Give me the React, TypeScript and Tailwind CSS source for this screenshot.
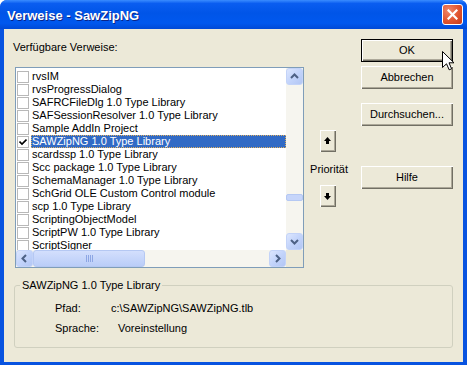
import { ReactNode } from 'react';

const refs = [
  { name: 'rvsIM', checked: false },
  { name: 'rvsProgressDialog', checked: false },
  { name: 'SAFRCFileDlg 1.0 Type Library', checked: false },
  { name: 'SAFSessionResolver 1.0 Type Library', checked: false },
  { name: 'Sample AddIn Project', checked: false },
  { name: 'SAWZipNG 1.0 Type Library', checked: true },
  { name: 'scardssp 1.0 Type Library', checked: false },
  { name: 'Scc package 1.0 Type Library', checked: false },
  { name: 'SchemaManager 1.0 Type Library', checked: false },
  { name: 'SchGrid OLE Custom Control module', checked: false },
  { name: 'scp 1.0 Type Library', checked: false },
  { name: 'ScriptingObjectModel', checked: false },
  { name: 'ScriptPW 1.0 Type Library', checked: false },
  { name: 'ScriptSigner', checked: false },
];

const selectedIndex = 5;

// classic 3d button look used by the VBA dialogs
const btn3d =
  'bg-[#ECE9D8] shadow-[inset_1px_1px_0_#ffffff,inset_-1px_-1px_0_#716F64,inset_-2px_-2px_0_#ACA899] flex items-center justify-center text-black';

const ScrollBtn = ({ dir }: { dir: 'up' | 'down' | 'left' | 'right' }) => {
  const rot = { up: 0, right: 90, down: 180, left: 270 }[dir];
  return (
    <div className="w-[17px] h-[17px] shrink-0 rounded-[3px] border border-[#C3D3F8] bg-[linear-gradient(135deg,#DCE6FE_0%,#C3D4FB_50%,#B2C6F4_100%)] flex items-center justify-center">
      <svg width="9" height="9" viewBox="0 0 9 9" style={{ transform: `rotate(${rot}deg)` }}>
        <path d="M1 6 L4.5 2.5 L8 6" fill="none" stroke="#4D6185" strokeWidth="2" />
      </svg>
    </div>
  );
};

const PushButton = ({ children, isDefault }: { children: ReactNode; isDefault?: boolean }) => (
  <div
    className={`w-[92px] h-[23px] ${btn3d} ${isDefault ? 'border border-black' : ''}`}
  >
    {children}
  </div>
);

const Arrow = ({ down }: { down?: boolean }) => (
  <div className={`w-[16px] h-[22px] ${btn3d}`}>
    <svg width="7" height="8" viewBox="0 0 7 8" style={{ transform: down ? 'rotate(180deg)' : undefined }}>
      <polygon points="3.5,0 7,4 0,4" fill="#000" />
      <rect x="2" y="4" width="3" height="3" fill="#000" />
    </svg>
  </div>
);

export default function App() {
  return (
    <div className="relative w-[467px] h-[365px] flex flex-col bg-[#0853E0] rounded-t-[7px] overflow-hidden font-['Liberation_Sans',Arial,sans-serif] text-[11px] leading-[13px] text-black">
      {/* title bar */}
      <div className="h-[29px] shrink-0 flex items-center justify-between pl-[7px] pr-[4px] bg-[linear-gradient(to_bottom,#3A8CFF_0%,#0A5DF0_12%,#0055E8_45%,#0058EE_80%,#0049D6_100%)]">
        <span className="text-white font-bold text-[13px] pt-[1px] [text-shadow:1px_1px_0_#0A2488]">
          Verweise - SawZipNG
        </span>
        <div className="w-[21px] h-[21px] rounded-[3px] border border-white bg-[radial-gradient(circle_at_30%_30%,#F0876A_0%,#E0542F_55%,#C43A1A_100%)] flex items-center justify-center">
          <svg width="11" height="11" viewBox="0 0 11 11">
            <path d="M1.5 1.5 L9.5 9.5 M9.5 1.5 L1.5 9.5" stroke="#fff" strokeWidth="2.2" strokeLinecap="square" />
          </svg>
        </div>
      </div>

      {/* client area */}
      <div className="flex-1 mx-[4px] mb-[3px] bg-[#ECE9D8] flex flex-col">
        <div className="flex">
          {/* list column */}
          <div className="pl-[11px] pt-[12px]">
            <div className="-ml-[2px]">Verfügbare Verweise:</div>
            <div className="mt-[13px] w-[289px] h-[201px] border border-[#7F9DB9] bg-white flex flex-col">
              <div className="flex h-[182px]">
                <div className="flex-1 overflow-hidden pt-[2px]">
                  {refs.map((r, i) => {
                    const sel = i === selectedIndex;
                    return (
                      <div key={r.name} className="h-[13px] flex items-center">
                        <div className="ml-[1px] mr-[2px] w-[12px] h-[12px] shrink-0 border border-[#B8B8B8] bg-white flex items-center justify-center">
                          {r.checked && (
                            <svg width="8" height="8" viewBox="0 0 8 8">
                              <path d="M0.5 3.5 L3 6 L7.5 1.5" fill="none" stroke="#000" strokeWidth="1.6" />
                            </svg>
                          )}
                        </div>
                        <div
                          className={`flex-1 h-[13px] pl-[1px] whitespace-nowrap overflow-hidden ${
                            sel ? 'bg-[#316AC5] text-white outline-1 outline-dotted outline-[#E0B060] -outline-offset-1' : ''
                          }`}
                        >
                          {r.name}
                        </div>
                      </div>
                    );
                  })}
                </div>
                {/* vertical scrollbar */}
                <div className="w-[17px] flex flex-col bg-[#F6F5EF]">
                  <ScrollBtn dir="up" />
                  <div className="flex-1">
                    <div className="mt-[109px] h-[7px] rounded-[2px] border border-[#B5C8F3] bg-[#C6D5FA]" />
                  </div>
                  <ScrollBtn dir="down" />
                </div>
              </div>
              {/* horizontal scrollbar */}
              <div className="flex h-[17px]">
                <div className="flex-1 flex bg-[#F6F5EF]">
                  <ScrollBtn dir="left" />
                  <div className="w-[112px] h-[17px] rounded-[3px] border border-[#B5C8F3] bg-[linear-gradient(to_bottom,#D3DFFD,#BACDF8)] flex items-center justify-center gap-[1px]">
                    {[0, 1, 2, 3].map((k) => (
                      <div key={k} className="w-[1px] h-[7px] bg-[#8DA6E4]" />
                    ))}
                  </div>
                  <div className="flex-1" />
                  <ScrollBtn dir="right" />
                </div>
                <div className="w-[17px] bg-[#ECE9D8]" />
              </div>
            </div>
          </div>

          {/* priority column */}
          <div className="w-[50px] pt-[101px] flex flex-col items-center">
            <div className="-ml-[3px]"><Arrow /></div>
            <div className="mt-[11px]">Priorität</div>
            <div className="mt-[9px] -ml-[3px]"><Arrow down /></div>
          </div>

          {/* buttons */}
          <div className="ml-[7px] pt-[10px] flex flex-col">
            <PushButton isDefault>OK</PushButton>
            <div className="mt-[4px]"><PushButton>Abbrechen</PushButton></div>
            <div className="mt-[14px]"><PushButton>Durchsuchen...</PushButton></div>
            <div className="mt-[40px]"><PushButton>Hilfe</PushButton></div>
          </div>
        </div>

        {/* info group */}
        <fieldset className="mt-[11px] mx-[10px] h-[69px] border border-[#D0D0BF] rounded-[3px]">
          <legend className="ml-[5px] px-[2px]">SAWZipNG 1.0 Type Library</legend>
          <div className="pl-[40px] pt-[10px] flex flex-col gap-[7px]">
            <div className="flex">
              <span className="w-[56px]">Pfad:</span>
              <span>c:\SAWZipNG\SAWZipNG.tlb</span>
            </div>
            <div className="flex">
              <span className="w-[56px]">Sprache:</span>
              <span className="ml-[7px]">Voreinstellung</span>
            </div>
          </div>
        </fieldset>
      </div>

      {/* mouse pointer over OK */}
      <svg className="absolute left-[442px] top-[51px]" width="13" height="20" viewBox="0 0 13 20">
        <path d="M0.5 0.5 L0.5 16.5 L4.5 12.8 L7.2 18.8 L9.6 17.8 L7 11.8 L12 11.8 Z" fill="#fff" stroke="#000" strokeWidth="1" strokeLinejoin="miter" />
      </svg>
    </div>
  );
}
